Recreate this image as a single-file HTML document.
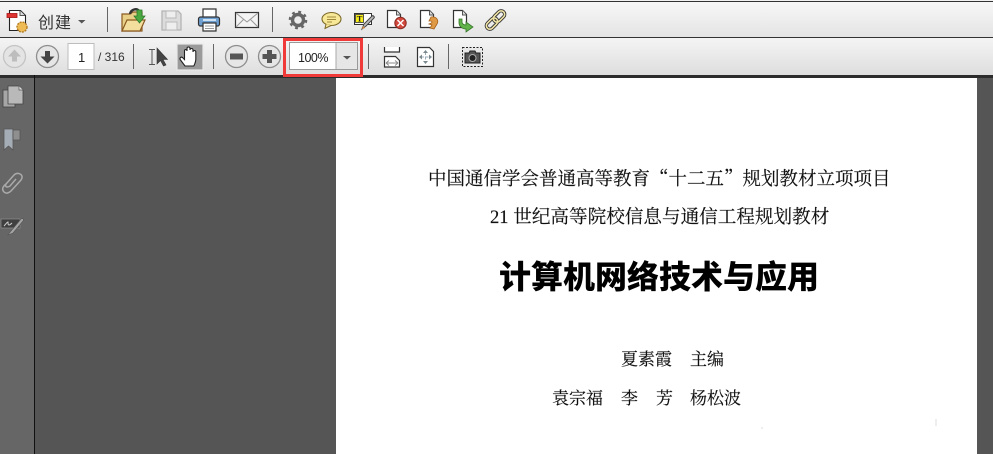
<!DOCTYPE html>
<html lang="zh-CN"><head><meta charset="utf-8">
<style>
html,body{margin:0;padding:0;width:993px;height:454px;overflow:hidden;background:#555}
.a{position:absolute}
.t{position:absolute;white-space:pre;line-height:1;color:#111}
svg{position:absolute;left:0;top:0}
.serif{font-family:"Liberation Serif","Noto Serif CJK SC",serif;-webkit-text-stroke:.15px #111}
</style></head>
<body>
<div class="a" style="left:0;top:0;width:993px;height:454px;overflow:hidden">
<div class="a" style="left:0;top:0;width:993px;height:1px;background:#f2f2f2"></div>
<div class="a" style="left:0;top:1px;width:993px;height:1px;background:#333"></div>
<div class="a" style="left:0;top:2px;width:993px;height:35px;background:linear-gradient(#f7f7f7,#e4e4e4)"></div>
<div class="a" style="left:0;top:37px;width:993px;height:1px;background:#333"></div>
<div class="a" style="left:0;top:38px;width:993px;height:37px;background:linear-gradient(#f4f4f4,#dedede)"></div>
<div class="a" style="left:0;top:75px;width:993px;height:3px;background:#2c2c2c"></div>
<div class="a" style="left:0;top:78px;width:34px;height:376px;background:#666"></div>
<div class="a" style="left:34px;top:75px;width:1px;height:379px;background:#111"></div>
<div class="a" style="left:35px;top:78px;width:958px;height:376px;background:#555"></div>
<div class="a" style="left:336px;top:78px;width:641px;height:376px;background:#fff"></div>

<svg width="993" height="454" viewBox="0 0 993 454">
<!-- separators -->
<g fill="#666">
<rect x="107" y="7" width="1" height="25"/><rect x="272" y="7" width="1" height="25"/>
<rect x="133" y="44" width="1" height="25"/><rect x="213" y="44" width="1" height="25"/>
<rect x="368" y="44" width="1" height="25"/><rect x="448" y="44" width="1" height="25"/>
</g>
<!-- create -->
<path d="M9.500 10.500h11l5 5v15h-16z" fill="#fff" stroke="#222" stroke-width="1.100"/>
<path d="M20 10.500v5h5" fill="#ddd" stroke="#555"/>
<rect x="7" y="13.500" width="10" height="4" fill="#d33" stroke="#a11" stroke-width=".8"/>
<circle cx="22" cy="27" r="5" fill="#eebb55" stroke="#b27a20" stroke-width="1.400" stroke-dasharray="2 1"/>
<path d="M78 20h7.500l-3.750 3.500z" fill="#555"/>
<!-- open folder -->
<path d="M122 31V14h8l3-2h9v19z" fill="#e8cf88" stroke="#8a5a20" stroke-width="1.200"/>
<path d="M122 31l5-11h18l-5 11z" fill="#f3de9e" stroke="#8a5a20" stroke-width="1.200"/>
<path d="M130 14c1-5 7-6 9-3v2" fill="none" stroke="#333" stroke-width="2.400"/>
<path d="M137 10h5v6h3l-5.500 7-5.500-7h3z" fill="#49a83f" stroke="#2e7a2c" stroke-width=".8"/>
<!-- save -->
<path d="M162 11h16l3 3v16h-19z" fill="#dcdcdc" stroke="#b4b4b4" stroke-width="1.300"/>
<rect x="166" y="11" width="10" height="7" fill="#eee" stroke="#b8b8b8"/>
<rect x="166" y="22" width="11" height="8" fill="#eee" stroke="#bbb"/>
<!-- print -->
<path d="M203 9h13v9h-13z" fill="#fff" stroke="#333" stroke-width="1.200"/>
<rect x="198.500" y="17" width="21" height="9" rx="2" fill="#6d9fd0" stroke="#333" stroke-width="1.200"/>
<rect x="203" y="19" width="13" height="2" fill="#cfe2f3"/>
<path d="M203 23h13v8h-13z" fill="#fff" stroke="#333" stroke-width="1.200"/>
<path d="M205 26h9M205 28.500h9" stroke="#999"/>
<!-- mail -->
<rect x="235.500" y="12.500" width="23" height="15" fill="#f4f4f4" stroke="#333" stroke-width="1.200"/>
<path d="M236 13l11 9 11-9M236 27l8-8M258 27l-8-8" fill="none" stroke="#999"/>
<!-- gear -->
<circle cx="298" cy="20" r="5.500" fill="#ececec" stroke="#666" stroke-width="3.400"/>
<circle cx="298" cy="20" r="8" fill="none" stroke="#666" stroke-width="2.600" stroke-dasharray="2.800 3.480"/>
<!-- comment -->
<ellipse cx="331.500" cy="19" rx="9.500" ry="6.500" fill="#f6e896" stroke="#7d6a2b" stroke-width="1.100"/>
<path d="M326 24l-1 4.500 6-3" fill="#f6e896" stroke="#7d6a2b"/>
<path d="M327 17h9M327 19.500h9M327 22h5" stroke="#a18a3c"/>
<!-- text tool -->
<rect x="354.500" y="13.500" width="17" height="11" fill="#fff" stroke="#333"/>
<rect x="355.500" y="14.500" width="8" height="8" fill="#f7ee1a" stroke="#333" stroke-width=".8"/>
<text x="356.800" y="21.500" font-family="Liberation Serif,serif" font-size="8.500" font-weight="bold" fill="#222">T</text>
<path d="M362 29l2-5 8-8c1-1 3 1 2 2l-8 8z" fill="#bbb" stroke="#444"/>
<path d="M362 29l1-3 2 2z" fill="#d98a3b"/>
<!-- doc delete -->
<path d="M387.500 10.500h9l4 4v13h-13z" fill="#fff" stroke="#333" stroke-width="1.200"/>
<path d="M396.500 10.500v4.500h4" fill="#ddd" stroke="#555"/>
<circle cx="400.500" cy="23" r="5.700" fill="#d2483c" stroke="#8a2a20"/>
<path d="M397.500 20l6 6M403.500 20l-6 6" stroke="#fff" stroke-width="1.500"/>
<!-- doc share -->
<path d="M420.500 10.500h9l4 4v13h-13z" fill="#fff" stroke="#333" stroke-width="1.200"/>
<path d="M429.500 10.500v4.500h4" fill="#ddd" stroke="#555"/>
<path d="M431 17c6-1 8 4 6 7l-3 5-4-1 2-3-3-1c3-1 4-2 2-3h-2z" fill="#e09a46" stroke="#a4601c" stroke-width=".8"/>
<!-- doc export -->
<path d="M453.500 10.500h9l4 4v13h-13z" fill="#fff" stroke="#333" stroke-width="1.200"/>
<path d="M462.500 10.500v4.500h4" fill="#ddd" stroke="#555"/>
<path d="M459 19h3v3c0 2 2 3 4 3v-3l7 5-7 5v-3c-4 0-7-3-7-6z" fill="#63b34b" stroke="#35762a" stroke-width=".8"/>
<!-- link -->
<g fill="none" transform="rotate(-45 495.500 20)">
<rect x="484" y="16.500" width="13" height="7" rx="3.500" stroke="#333" stroke-width="3.400"/>
<rect x="494" y="16.500" width="13" height="7" rx="3.500" stroke="#333" stroke-width="3.400"/>
<rect x="484" y="16.500" width="13" height="7" rx="3.500" stroke="#f0e3a6" stroke-width="1.600"/>
<rect x="494" y="16.500" width="13" height="7" rx="3.500" stroke="#f0e3a6" stroke-width="1.600"/>
</g>

<!-- nav buttons -->
<circle cx="14.500" cy="56.500" r="11" fill="#e4e4e4" stroke="#c4c4c4" stroke-width="1.300"/>
<path d="M14.500 49.500l6.500 7h-4v5h-5v-5h-4z" fill="#bdbdbd"/>
<circle cx="47.500" cy="56.500" r="11" fill="#e6e6e6" stroke="#8e8e8e" stroke-width="1.300"/>
<path d="M47.500 63.500l-7-7h4.500V51h5v5.500h4.500z" fill="#444"/>
<rect x="68" y="43.500" width="26" height="26" fill="#fff" stroke="#bdbdbd"/>
<!-- select tool -->
<path d="M149 49.500h6M149 64.500h6M152 49.500v15" stroke="#555" fill="none"/>
<path d="M157 48v16l3.500-3.500 3 5.500 2.500-1-3-5.500h4.500z" fill="#444" stroke="#333" stroke-width=".6"/>
<!-- hand -->
<rect x="177" y="44" width="26" height="26" fill="#9a9a9a" stroke="#e8e8e8" stroke-width="1.200"/>
<path d="M185 66l-4.500-6c-1.500-2 .5-3.500 2-2.500l2 2V51c0-2 2.500-2 2.500 0v-2.500c0-2 3-2 3 0V50c0-2 3-2 3 0v2c0-2 2.800-2 2.800 0v7c0 3-1 5-2 7z" fill="#fff" stroke="#222" stroke-width="1.100"/>
<!-- zoom buttons -->
<circle cx="236.500" cy="56.500" r="11" fill="#e6e6e6" stroke="#8e8e8e" stroke-width="1.300"/>
<rect x="230" y="53.500" width="13" height="6" fill="#555"/>
<circle cx="269.500" cy="56.500" r="11" fill="#e6e6e6" stroke="#8e8e8e" stroke-width="1.300"/>
<path d="M267 50h5v4h4.500v5H272v4h-5v-4h-4.500v-5h4.500z" fill="#555"/>
<!-- zoom combobox -->
<rect x="289.500" y="42.500" width="68" height="27" fill="#fff" stroke="#999"/>
<rect x="336" y="43" width="21" height="26" fill="#e6e6e6"/>
<rect x="335.500" y="43" width="1" height="26" fill="#aaa"/>
<path d="M343 56h8l-4 3.500z" fill="#555"/>
<rect x="284.500" y="39.500" width="77" height="36" fill="none" stroke="#f03a3a" stroke-width="3"/>
<!-- fit width -->
<path d="M384.500 47v5h15v-5" fill="#fff" stroke="#333" stroke-width="1.200"/>
<path d="M384.500 56.500h11l4 4v6.500h-15z" fill="#fff" stroke="#333" stroke-width="1.200"/>
<path d="M386 63h12M386 63l3-2.500M386 63l3 2.500M398 63l-3-2.500M398 63l-3 2.500" stroke="#888" fill="none"/>
<!-- fit page -->
<path d="M417.500 47.500h12l4 4v15h-16z" fill="#fff" stroke="#333" stroke-width="1.200"/>
<path d="M425.500 52v10M421 57h9" stroke="#9ab" fill="none" stroke-dasharray="3 1.500"/>
<path d="M423 53l2.500-3 2.500 3zM423 61l2.500 3 2.500-3zM422 54.500l-3 2.500 3 2.500zM429 54.500l3 2.500-3 2.500z" fill="#7a8a90"/>
<!-- snapshot -->
<rect x="462.500" y="47.500" width="20" height="19" fill="#e8e8e8" stroke="#222" stroke-dasharray="2 1.500"/>
<path d="M465 53h4l1-2h5l1 2h4v10h-15z" fill="#555" stroke="#222"/>
<circle cx="472.500" cy="58" r="3.500" fill="#222" stroke="#aaa"/>

<!-- sidebar -->
<g>
<rect x="3" y="90" width="12" height="17" fill="#a6a6a6" stroke="#444" stroke-width=".8"/>
<path d="M8 86h11l4 4v14H8z" fill="#b9b9b9" stroke="#444" stroke-width=".8"/>
<path d="M19 86v4h4" fill="#ddd" stroke="#555" stroke-width=".7"/>
<path d="M4 129h9v21l-4.500-4-4.500 4z" fill="#a4adb5" stroke="#555" stroke-width=".8"/>
<path d="M13 130h7v10h-7z" fill="#8f8f8f" stroke="#555" stroke-width=".8"/>
<path d="M6 184c-4 3-4 6-2 8s5 1 7-1l10-11c2-3 1-5-1-6s-4-1-6 1l-8 9c-1 2 0 3 1 3s2 0 3-1l6-7" fill="none" stroke="#aaa" stroke-width="1.500"/>
<path d="M1 219h19v9H1z" fill="#3f3f3f" stroke="#8a8a8a" stroke-width=".8"/>
<path d="M8 235l3-4 10-12c2-1 3 0 2 2l-10 12z" fill="#a4a4a4" stroke="#555" stroke-width=".6"/>
<path d="M4 226c2-2 3-4 4-4 0 2 0 3 1 3s2-1 3-2" fill="none" stroke="#ccc"/>
</g>
<!-- page specks -->
<path d="M761 428h2M936 419v7" stroke="#dedede"/>
</svg>

<div class="t" style="left:38px;top:13px;font:16px/1 'Noto Sans CJK SC',sans-serif;color:#333;letter-spacing:1px">创建</div>
<div class="t" style="left:78px;top:50px;font:13px 'Liberation Sans',sans-serif;color:#222">1</div>
<div class="t" style="left:98px;top:50px;font:12px 'Liberation Sans',sans-serif;color:#333">/ 316</div>
<div class="t" style="left:298px;top:51px;font:12.500px 'Liberation Sans',sans-serif;color:#222;letter-spacing:-.5px">100%</div>

<div class="t serif" style="left:428px;top:169px;font-size:18.500px;font-family:'Noto Serif CJK SC',serif">中国通信学会普通高等教育“十二五”规划教材立项项目</div>
<div class="t serif" style="left:490px;top:209px;font-size:18.600px">21 世纪高等院校信息与通信工程规划教材</div>
<div class="t" style="left:499px;top:259px;font:900 32px/1 'Noto Sans CJK SC',sans-serif;color:#000">计算机网络技术与应用</div>
<div class="t serif" style="left:621px;top:351px;font-size:17px">夏素霞</div>
<div class="t serif" style="left:690px;top:351px;font-size:17px">主编</div>
<div class="t serif" style="left:552px;top:390px;font-size:17px">袁宗福</div>
<div class="t serif" style="left:621px;top:390px;font-size:17px">李</div>
<div class="t serif" style="left:656px;top:390px;font-size:17px">芳</div>
<div class="t serif" style="left:690px;top:390px;font-size:17px">杨松波</div>
</div>
</body></html>
